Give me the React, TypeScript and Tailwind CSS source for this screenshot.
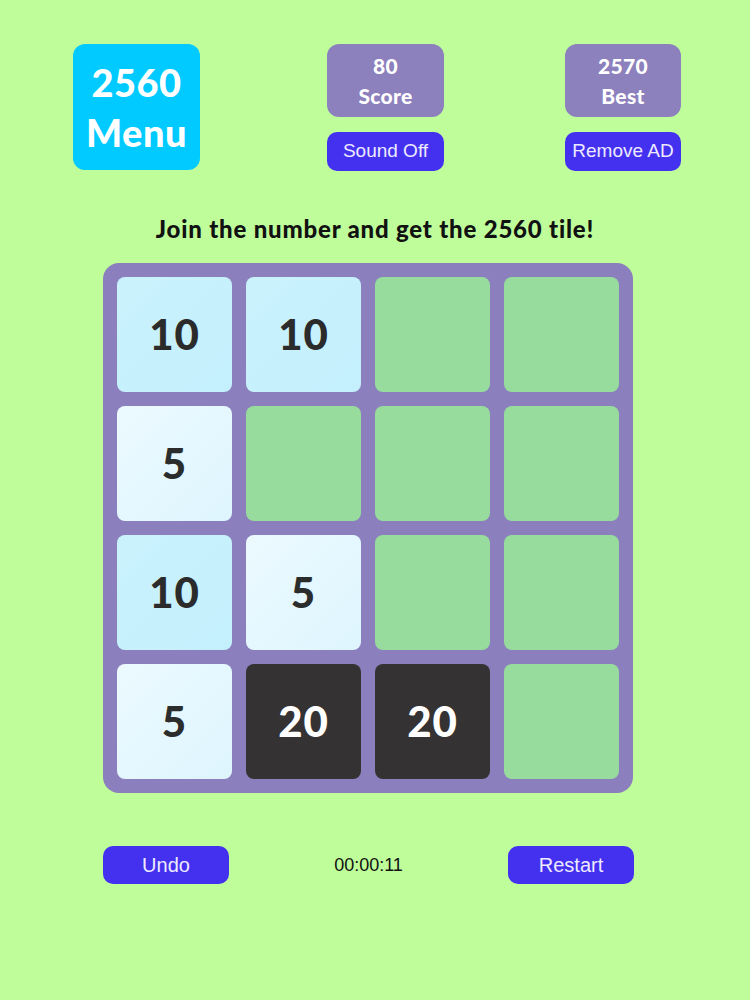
import React from 'react';

type Tile = number | null;

const board: Tile[][] = [
  [10, 10, null, null],
  [5, null, null, null],
  [10, 5, null, null],
  [5, 20, 20, null],
];

function tileClass(v: Tile) {
  if (v === null) return 'bg-[#97dc9c]';
  if (v === 5) return 'bg-gradient-to-br from-[#ecfaff] to-[#def5fe] text-[#2b2d2d]';
  if (v === 10) return 'bg-gradient-to-br from-[#c9f2fd] to-[#c4effc] text-[#2b2b2b]';
  return 'bg-[#343233] text-white';
}

export default function App() {
  return (
    <div
      className="w-[750px] h-[1000px] bg-[#bffd9b] flex flex-col"
      style={{ fontFamily: 'Lato, "Noto Sans", sans-serif' }}
    >
      {/* Header */}
      <div className="flex pt-[44px] pl-[73px]">
        <div className="w-[127px] h-[126px] rounded-[12px] bg-[#00caff] flex flex-col items-center justify-center text-white font-black text-[38px] leading-[50px] tracking-[0.5px]">
          <span>2560</span>
          <span>Menu</span>
        </div>

        <div className="ml-[127px] w-[117px] flex flex-col gap-[15px]">
          <div className="h-[73px] rounded-[12px] bg-[#8c80bd] flex flex-col items-center justify-center text-white font-black text-[21px] leading-[30px] tracking-[0.3px]">
            <span>80</span>
            <span>Score</span>
          </div>
          <button className="h-[39px] rounded-[10px] bg-[#4431f0] text-[#eeeaff] text-[19px] font-['Liberation_Sans',sans-serif]">
            Sound Off
          </button>
        </div>

        <div className="ml-[121px] w-[116px] flex flex-col gap-[15px]">
          <div className="h-[73px] rounded-[12px] bg-[#8c80bd] flex flex-col items-center justify-center text-white font-black text-[21px] leading-[30px] tracking-[0.3px]">
            <span>2570</span>
            <span>Best</span>
          </div>
          <button className="h-[39px] rounded-[10px] bg-[#4431f0] text-[#eeeaff] text-[19px] font-['Liberation_Sans',sans-serif]">
            Remove AD
          </button>
        </div>
      </div>

      {/* Title */}
      <div className="mt-[43px] text-center text-[24px] font-black text-[#111] leading-[30px] tracking-[0.8px]">
        Join the number and get the 2560 tile!
      </div>

      {/* Board */}
      <div className="mt-[19px] ml-[103px] w-[530px] p-[14px] rounded-[16px] bg-[#8b80bd] grid grid-cols-4 gap-[14px]">
        {board.flat().map((v, i) => (
          <div
            key={i}
            className={`h-[115px] rounded-[8px] flex items-center justify-center font-black text-[42px] tracking-[1px] ${tileClass(v)}`}
          >
            {v ?? ''}
          </div>
        ))}
      </div>

      {/* Footer */}
      <div className="mt-[53px] flex items-center pl-[103px] font-['Liberation_Sans',sans-serif]">
        <button className="w-[126px] h-[38px] rounded-[10px] bg-[#4431f0] text-[#eeeaff] text-[20px]">
          Undo
        </button>
        <div className="w-[279px] text-center text-[18px] text-[#111]">00:00:11</div>
        <button className="w-[126px] h-[38px] rounded-[10px] bg-[#4431f0] text-[#eeeaff] text-[20px]">
          Restart
        </button>
      </div>
    </div>
  );
}
